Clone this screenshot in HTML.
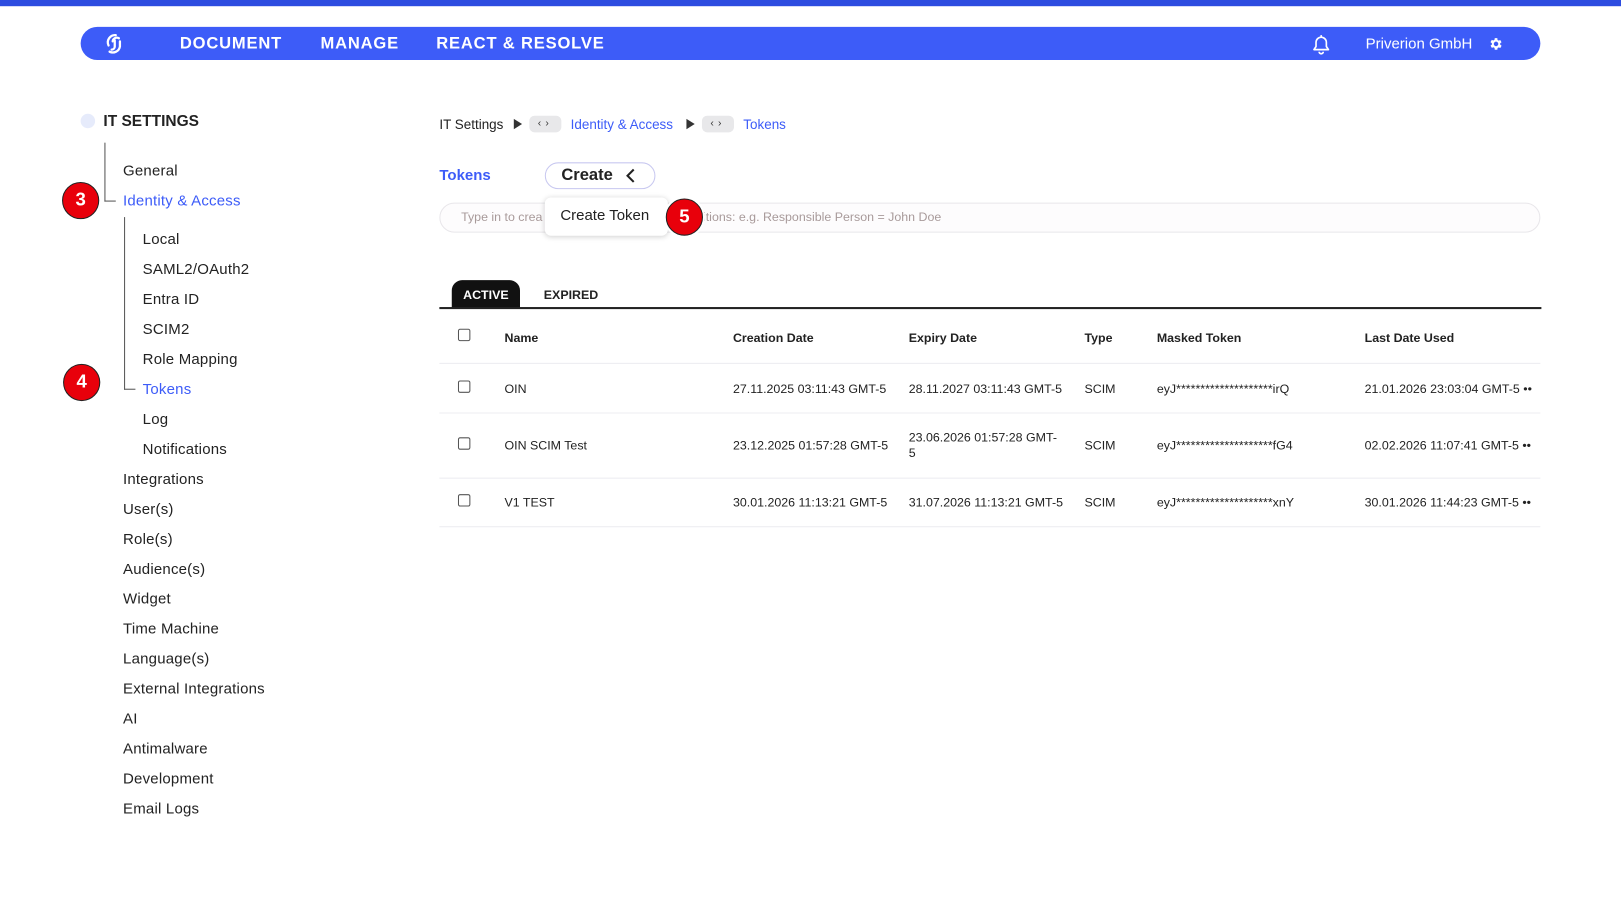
<!DOCTYPE html>
<html><head><meta charset="utf-8"><style>
*{margin:0;padding:0;box-sizing:border-box}
body{width:1621px;height:902px;background:#fff;font-family:"Liberation Sans",sans-serif;color:#222;position:relative;overflow:hidden}
#w{position:absolute;left:0;top:0;width:1568px;height:873px;transform:scale(1.03380);transform-origin:0 0}
.a{position:absolute;white-space:nowrap}
.top{left:0;top:0;width:1568px;height:6px;background:#2d4ce0}
.nav{left:78px;top:26px;width:1412px;height:32px;background:#3d5cf8;border-radius:16px}
.nl{color:#fff;font-size:16px;font-weight:bold;letter-spacing:0.8px;top:34px}
.side{font-size:14.5px;color:#222;letter-spacing:0.2px}
.blue{color:#3d5cf8}
.c{position:absolute;width:36px;height:36px;border-radius:50%;background:#e8000b;border:1.5px solid #222;box-shadow:0 0 0 2px #fff;color:#fff;font-weight:bold;font-size:18px;text-align:center;line-height:33px}
.th{font-size:12px;font-weight:bold;color:#222}
.td{font-size:12px;color:#222}
.hr{position:absolute;left:425px;width:1065px;height:1px;background:#ececf0}
.cb{position:absolute;width:12px;height:12px;border:1px solid #555;border-radius:2px;background:#fff}
.pill{position:absolute;width:31px;height:16px;background:#e8e8ea;border-radius:5px;font-size:10px;line-height:16px;text-align:center;color:#333;letter-spacing:4px}
</style></head><body><div id="w">
<div class="a top"></div>
<div class="a nav"></div>
<svg class="a" style="left:100px;top:31px" width="24" height="22" viewBox="0 0 24 22"><g fill="none" stroke="#fff" stroke-width="2.2" stroke-linecap="round"><path d="M5 13 A7 7 0 0 1 12 3"/><path d="M9 9 A4 4 0 0 1 15 6"/><path d="M11 8 V14 A3 3 0 0 1 8 17"/><path d="M16 9 V14 A7 7 0 0 1 6 19"/></g></svg>
<div class="a nl" style="left:174px">DOCUMENT</div>
<div class="a nl" style="left:310px">MANAGE</div>
<div class="a nl" style="left:422px">REACT &amp; RESOLVE</div>
<svg class="a" style="left:1268px;top:32px" width="20" height="22" viewBox="0 0 20 22"><path d="M3 16 H17 L15 13 V9 A5 5 0 0 0 5 9 V13 Z M10 2 V4 M8 18 A2 2 0 0 0 12 18" fill="none" stroke="#fff" stroke-width="1.6" stroke-linejoin="round"/></svg>
<div class="a" style="left:1321px;top:35px;color:#fff;font-size:14.5px">Priverion GmbH</div>
<svg class="a" style="left:1439px;top:35px" width="15" height="15" viewBox="0 0 24 24"><path fill="#fff" d="M19.4 13a7.5 7.5 0 0 0 0-2l2.1-1.6-2-3.5-2.5 1a7 7 0 0 0-1.7-1L15 3h-4l-.4 2.7a7 7 0 0 0-1.7 1l-2.5-1-2 3.5L6.6 11a7.5 7.5 0 0 0 0 2l-2.1 1.6 2 3.5 2.5-1a7 7 0 0 0 1.7 1L11 21h4l.4-2.7a7 7 0 0 0 1.7-1l2.5 1 2-3.5zM13 15.5a3.5 3.5 0 1 1 0-7 3.5 3.5 0 0 1 0 7z"/></svg>

<div class="a" style="left:78px;top:110px;width:14px;height:14px;border-radius:50%;background:#e6ebfb"></div>
<div class="a" style="left:100px;top:109px;font-size:15px;font-weight:bold;color:#222">IT SETTINGS</div>
<div class="a" style="left:101px;top:138px;width:1px;height:57px;background:#555"></div>
<div class="a" style="left:101px;top:194px;width:11px;height:1px;background:#555"></div>
<div class="a" style="left:120px;top:210px;width:1px;height:167px;background:#555"></div>
<div class="a" style="left:120px;top:376px;width:11px;height:1px;background:#555"></div>
<div class="a side" style="left:119px;top:158px">General</div>
<div class="a side blue" style="left:119px;top:187px">Identity &amp; Access</div>
<div class="a side" style="left:138px;top:224px">Local</div>
<div class="a side" style="left:138px;top:253px">SAML2/OAuth2</div>
<div class="a side" style="left:138px;top:282px">Entra ID</div>
<div class="a side" style="left:138px;top:311px">SCIM2</div>
<div class="a side" style="left:138px;top:340px">Role Mapping</div>
<div class="a side blue" style="left:138px;top:369px">Tokens</div>
<div class="a side" style="left:138px;top:398px">Log</div>
<div class="a side" style="left:138px;top:427px">Notifications</div>
<div class="a side" style="left:119px;top:456px">Integrations</div>
<div class="a side" style="left:119px;top:485px">User(s)</div>
<div class="a side" style="left:119px;top:514px">Role(s)</div>
<div class="a side" style="left:119px;top:543px">Audience(s)</div>
<div class="a side" style="left:119px;top:572px">Widget</div>
<div class="a side" style="left:119px;top:601px">Time Machine</div>
<div class="a side" style="left:119px;top:630px">Language(s)</div>
<div class="a side" style="left:119px;top:659px">External Integrations</div>
<div class="a side" style="left:119px;top:688px">AI</div>
<div class="a side" style="left:119px;top:717px">Antimalware</div>
<div class="a side" style="left:119px;top:746px">Development</div>
<div class="a side" style="left:119px;top:775px">Email Logs</div>
<div class="c" style="left:60px;top:176px">3</div>
<div class="c" style="left:61px;top:352px">4</div>

<div class="a" style="left:425px;top:113px;font-size:13px">IT Settings</div>
<div class="a" style="left:497px;top:115px;width:0;height:0;border-left:8px solid #333;border-top:5px solid transparent;border-bottom:5px solid transparent"></div>
<div class="pill" style="left:512px;top:112px">‹›</div>
<div class="a blue" style="left:552px;top:113px;font-size:13px">Identity &amp; Access</div>
<div class="a" style="left:664px;top:115px;width:0;height:0;border-left:8px solid #333;border-top:5px solid transparent;border-bottom:5px solid transparent"></div>
<div class="pill" style="left:679px;top:112px">‹›</div>
<div class="a blue" style="left:719px;top:113px;font-size:13px">Tokens</div>

<div class="a blue" style="left:425px;top:162px;font-size:14.5px;font-weight:bold">Tokens</div>
<div class="a" style="left:527px;top:157px;width:107px;height:26px;border:1px solid #c8c8f0;border-radius:13px"></div>
<div class="a" style="left:543px;top:161px;font-size:16px;font-weight:bold;color:#222">Create</div>
<svg class="a" style="left:605px;top:163px" width="10" height="14" viewBox="0 0 10 14"><path d="M8 1 L2 7 L8 13" fill="none" stroke="#222" stroke-width="2"/></svg>
<div class="a" style="left:425px;top:196px;width:1065px;height:29px;border:1px solid #e8e6ea;border-radius:15px;background:#fdfcfd"></div>
<div class="a" style="left:446px;top:203px;font-size:12px;color:#a89a9a">Type in to crea</div>
<div class="a" style="left:680px;top:203px;font-size:12px;color:#a89a9a">itions: e.g. Responsible Person = John Doe</div>
<div class="a" style="left:527px;top:191px;width:119px;height:37px;background:#fff;border-radius:6px;box-shadow:0 1px 5px rgba(0,0,0,.18)"></div>
<div class="a" style="left:542px;top:201px;font-size:14.5px;color:#222">Create Token</div>
<div class="c" style="left:644px;top:192px">5</div>

<div class="a" style="left:437px;top:271px;width:66px;height:27px;background:#111;border-radius:10px 10px 0 0"></div>
<div class="a" style="left:448px;top:278px;font-size:12px;font-weight:bold;color:#fff">ACTIVE</div>
<div class="a" style="left:526px;top:278px;font-size:12px;font-weight:bold;color:#222">EXPIRED</div>
<div class="a" style="left:425px;top:297px;width:1066px;height:1.5px;background:#222"></div>

<div class="cb" style="left:443px;top:318px"></div>
<div class="a th" style="left:488px;top:320px">Name</div>
<div class="a th" style="left:709px;top:320px">Creation Date</div>
<div class="a th" style="left:879px;top:320px">Expiry Date</div>
<div class="a th" style="left:1049px;top:320px">Type</div>
<div class="a th" style="left:1119px;top:320px">Masked Token</div>
<div class="a th" style="left:1320px;top:320px">Last Date Used</div>
<div class="hr" style="top:351px"></div>

<div class="cb" style="left:443px;top:368px"></div>
<div class="a td" style="left:488px;top:369px">OIN</div>
<div class="a td" style="left:709px;top:369px">27.11.2025 03:11:43 GMT-5</div>
<div class="a td" style="left:879px;top:369px">28.11.2027 03:11:43 GMT-5</div>
<div class="a td" style="left:1049px;top:369px">SCIM</div>
<div class="a td" style="left:1119px;top:369px">eyJ********************irQ</div>
<div class="a td" style="left:1320px;top:369px">21.01.2026 23:03:04 GMT-5 ••</div>
<div class="hr" style="top:399px"></div>

<div class="cb" style="left:443px;top:423px"></div>
<div class="a td" style="left:488px;top:424px">OIN SCIM Test</div>
<div class="a td" style="left:709px;top:424px">23.12.2025 01:57:28 GMT-5</div>
<div class="a td" style="left:879px;top:416px;line-height:15px">23.06.2026 01:57:28 GMT-<br>5</div>
<div class="a td" style="left:1049px;top:424px">SCIM</div>
<div class="a td" style="left:1119px;top:424px">eyJ********************fG4</div>
<div class="a td" style="left:1320px;top:424px">02.02.2026 11:07:41 GMT-5 ••</div>
<div class="hr" style="top:462px"></div>

<div class="cb" style="left:443px;top:478px"></div>
<div class="a td" style="left:488px;top:479px">V1 TEST</div>
<div class="a td" style="left:709px;top:479px">30.01.2026 11:13:21 GMT-5</div>
<div class="a td" style="left:879px;top:479px">31.07.2026 11:13:21 GMT-5</div>
<div class="a td" style="left:1049px;top:479px">SCIM</div>
<div class="a td" style="left:1119px;top:479px">eyJ********************xnY</div>
<div class="a td" style="left:1320px;top:479px">30.01.2026 11:44:23 GMT-5 ••</div>
<div class="hr" style="top:509px"></div>
</div></body></html>
